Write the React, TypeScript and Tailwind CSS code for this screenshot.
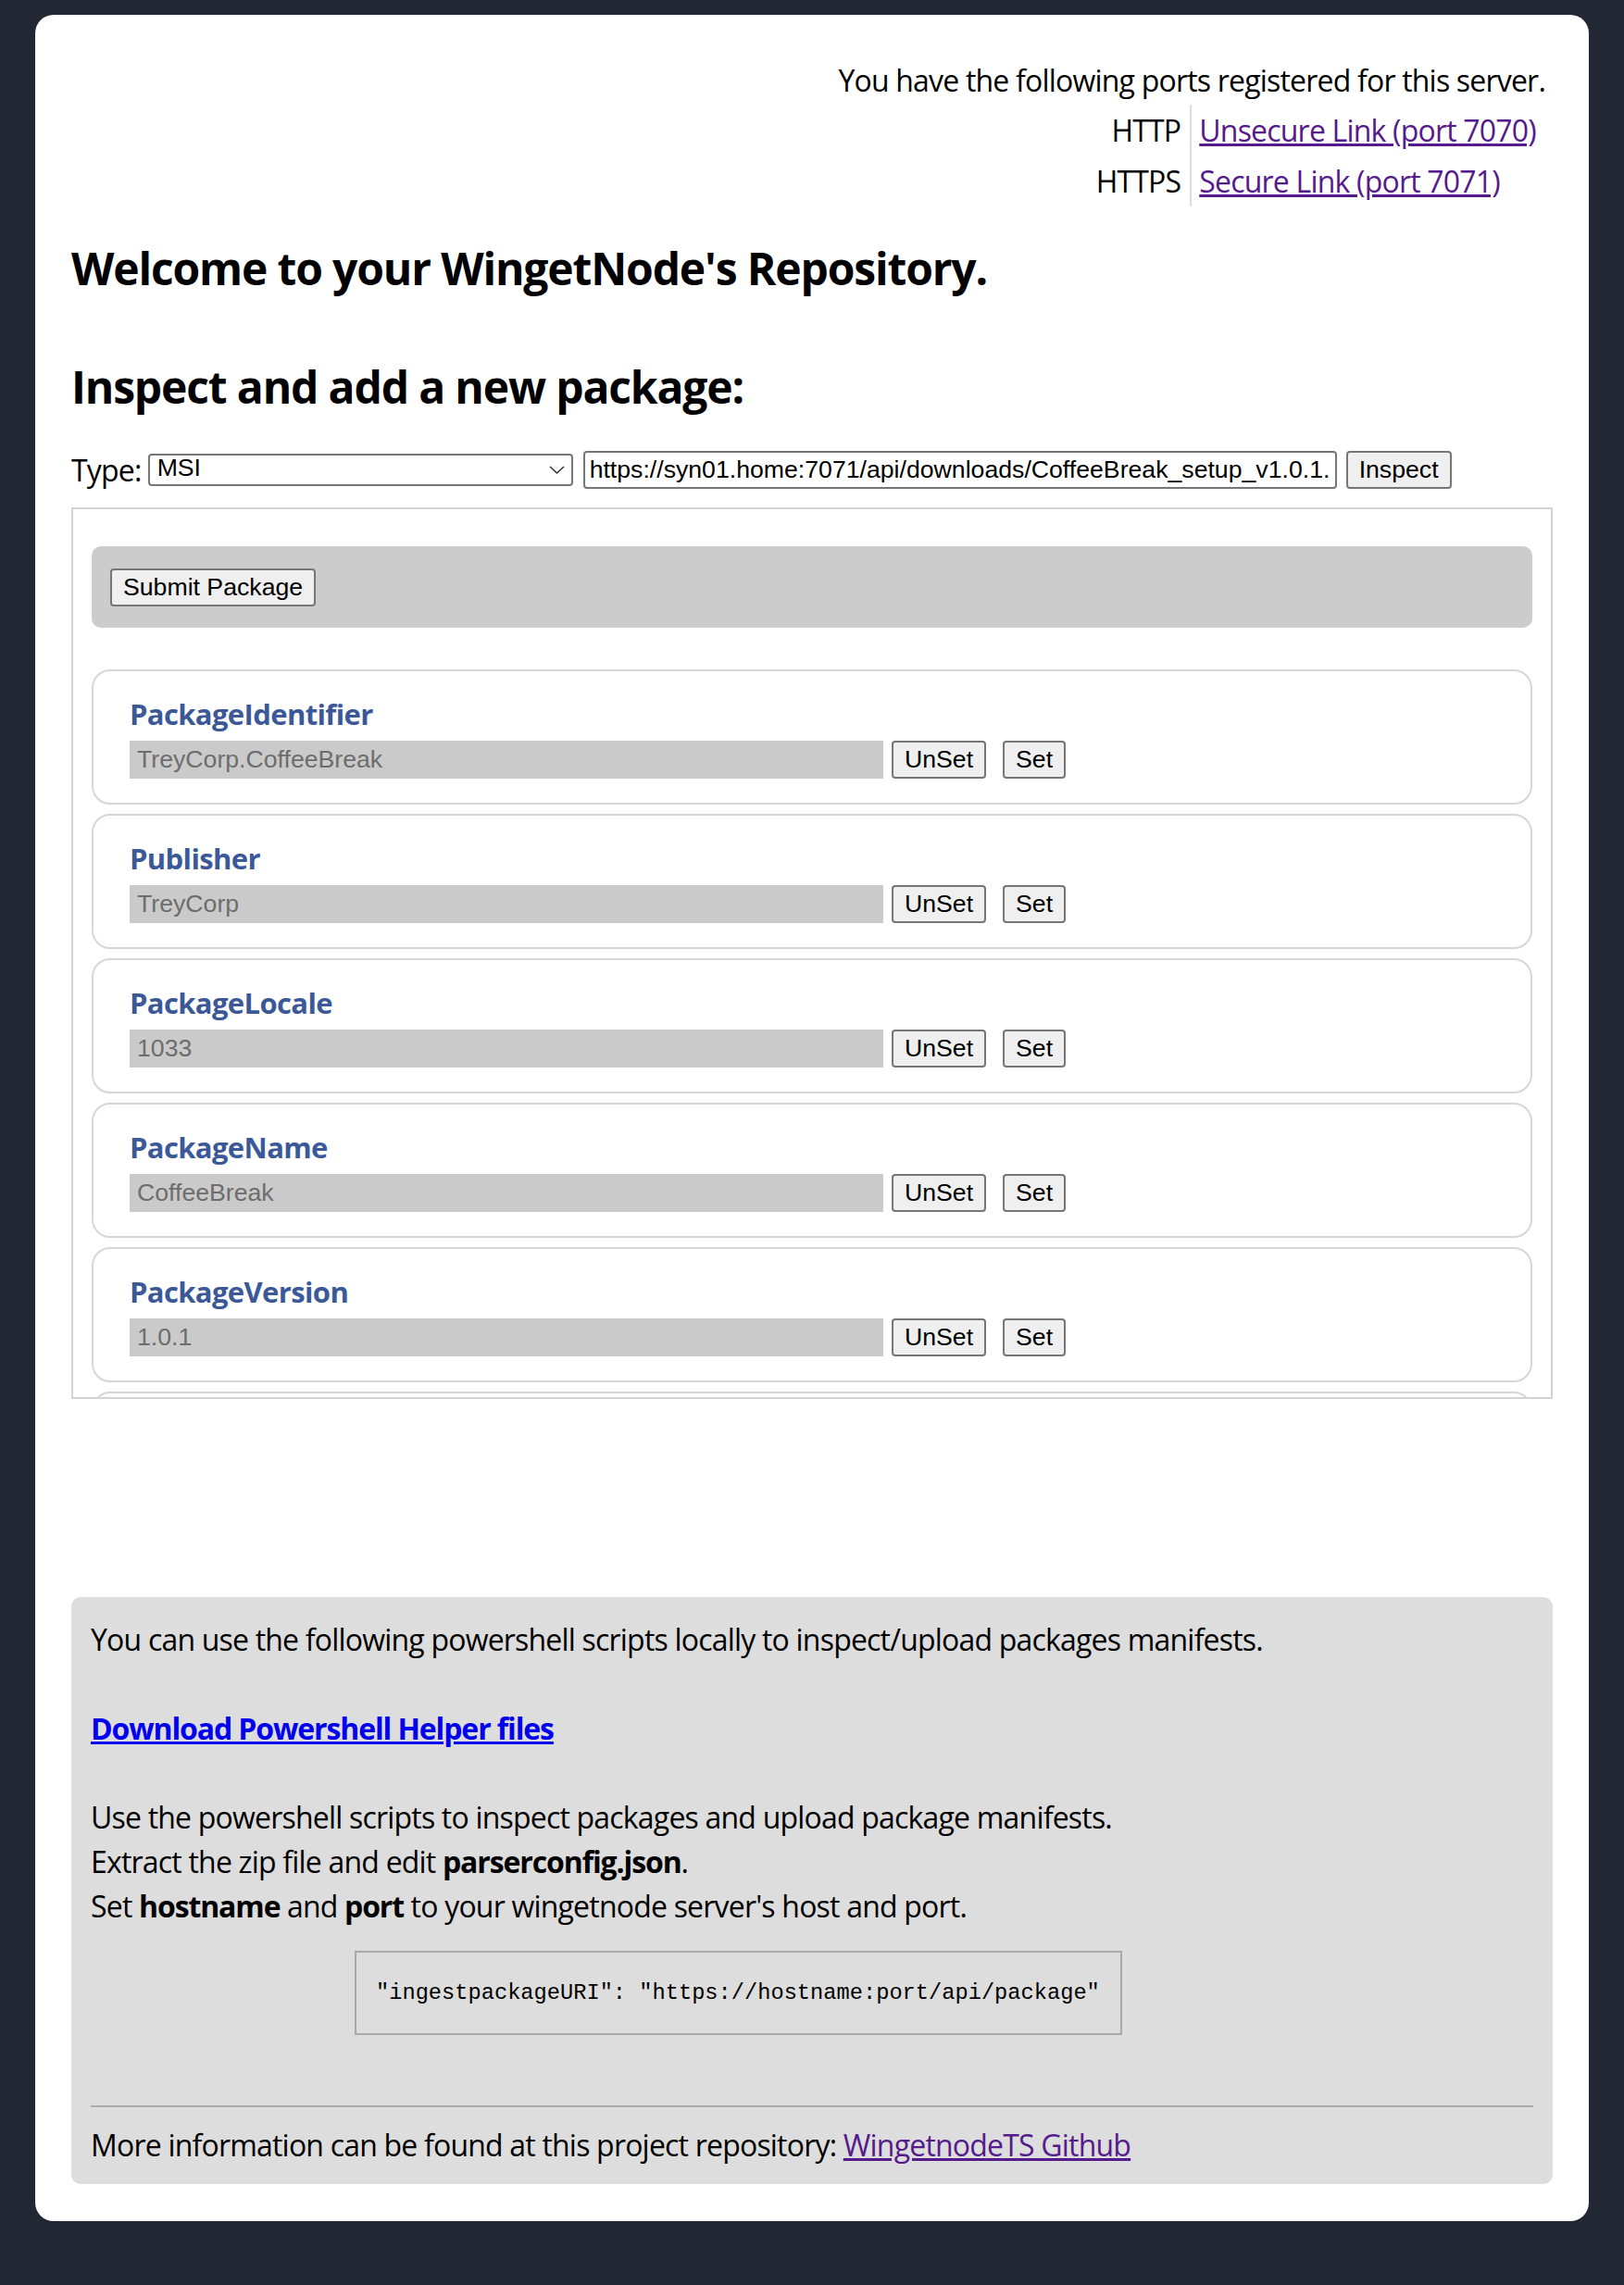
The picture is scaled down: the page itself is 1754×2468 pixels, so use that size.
import { useState } from 'react'

const fields = [
  { name: 'PackageIdentifier', value: 'TreyCorp.CoffeeBreak' },
  { name: 'Publisher', value: 'TreyCorp' },
  { name: 'PackageLocale', value: '1033' },
  { name: 'PackageName', value: 'CoffeeBreak' },
  { name: 'PackageVersion', value: '1.0.1' },
]

const ctl = "font-['Liberation_Sans',Arial,sans-serif] text-[26.67px] tracking-normal"
const btn = `${ctl} h-[41px] px-[12px] rounded-[4px] border-2 border-[#767676] bg-[#efefef] text-black leading-none`

function FieldCard({ name, value }: { name: string; value: string }) {
  return (
    <div className="mb-[10px] h-[146px] shrink-0 rounded-[20px] border-2 border-[#d6d6d6] pl-[39px] pt-[25px]">
      <div className="h-[42px] text-[31px] font-bold leading-[42px] tracking-[-0.02em] text-[#3b5998]">{name}</div>
      <div className="mt-[8px] flex items-center">
        <input
          readOnly
          value={value}
          className={`${ctl} h-[41px] w-[814px] bg-[#cacaca] px-[8px] text-[#6d6d6d] outline-none`}
        />
        <button className={`${btn} ml-[9px]`}>UnSet</button>
        <button className={`${btn} ml-[18px]`}>Set</button>
      </div>
    </div>
  )
}

export default function App() {
  const [type, setType] = useState('MSI')
  const [url, setUrl] = useState('https://syn01.home:7071/api/downloads/CoffeeBreak_setup_v1.0.1.msi')

  return (
    <div className="min-h-screen bg-[#222733] px-[38px] pt-[16px] pb-[71px] font-['Open_Sans','Noto_Sans',sans-serif] text-[32px] tracking-[-0.025em] text-black">
      <div className="rounded-[20px] bg-white px-[39px] pt-[50px] pb-[40px]">
        {/* registered ports */}
        <div className="pr-[8px] text-right">
          <p className="leading-[42px]">You have the following ports registered for this server.</p>
          <div className="mt-[5px] flex justify-end">
            <div className="grid grid-cols-[auto_auto] pr-[10px] leading-[42px]">
              <div className="flex h-[55px] items-center justify-end pr-[10px]">HTTP</div>
              <div className="flex h-[55px] items-center border-l-2 border-[#dddddd] pl-[8px]">
                <a href="#" className="text-[#551a8b] underline">Unsecure Link (port 7070)</a>
              </div>
              <div className="flex h-[55px] items-center justify-end pr-[10px]">HTTPS</div>
              <div className="flex h-[55px] items-center border-l-2 border-[#dddddd] pl-[8px]">
                <a href="#" className="text-[#551a8b] underline">Secure Link (port 7071)</a>
              </div>
            </div>
          </div>
        </div>

        <h2 className="mt-[35px] text-[48px] font-bold leading-[64px] tracking-[-0.024em]">Welcome to your WingetNode's Repository.</h2>
        <h2 className="mt-[64px] text-[48px] font-bold leading-[64px] tracking-[-0.024em]">Inspect and add a new package:</h2>

        {/* inspect row */}
        <div className="mt-[37px] flex h-[41px] items-center">
          <span className="leading-[42px]">Type:</span>
          <div className="relative ml-[7px] flex">
            <select
              value={type}
              onChange={(e) => setType(e.target.value)}
              className={`${ctl} block h-[35px] w-[459px] appearance-none rounded-[4px] border-2 border-[#767676] bg-white pt-0 pb-[4px] pl-[8px] leading-[27px] text-black outline-none`}
            >
              <option>MSI</option>
              <option>EXE</option>
              <option>MSIX</option>
            </select>
            <svg className="pointer-events-none absolute right-[9px] top-[13px]" width="17" height="9" viewBox="0 0 17 9" fill="none">
              <path d="M1 1 8.5 8 16 1" stroke="#333" strokeWidth="1.5" />
            </svg>
          </div>
          <input
            value={url}
            onChange={(e) => setUrl(e.target.value)}
            className={`${ctl} ml-[11px] h-[41px] w-[814px] rounded-[4px] border-2 border-[#767676] bg-white px-[5px] text-black outline-none`}
          />
          <button className={`${btn} ml-[10px]`}>Inspect</button>
        </div>

        {/* package manifest editor */}
        <div className="mt-[20px] flex h-[963px] flex-col overflow-hidden border-2 border-[#d3d3d3] px-[20px] pt-[40px]">
          <div className="flex h-[88px] shrink-0 items-center rounded-[10px] bg-[#cccccc] pl-[20px]">
            <button className={`${btn} h-[40px]`}>Submit Package</button>
          </div>
          <div className="mt-[45px] flex flex-col">
            {fields.map((f) => (
              <FieldCard key={f.name} name={f.name} value={f.value} />
            ))}
            {/* next card, scrolled out of view */}
            <div className="h-[146px] shrink-0 rounded-[20px] border-2 border-[#d6d6d6]" />
          </div>
        </div>

        {/* powershell helpers */}
        <div className="mt-[214px] rounded-[10px] bg-[#dddddd] px-[21px] pt-[22px] pb-[18px] leading-[48px]">
          <p>You can use the following powershell scripts locally to inspect/upload packages manifests.</p>
          <p className="mt-[48px]">
            <a href="#" className="font-bold tracking-[-0.035em] text-[#0000ee] underline">Download Powershell Helper files</a>
          </p>
          <p className="mt-[48px]">Use the powershell scripts to inspect packages and upload package manifests.</p>
          <p>
            Extract the zip file and edit <b className="font-bold tracking-[-0.035em]">parserconfig.json</b>.
          </p>
          <p>
            Set <b className="font-bold tracking-[-0.035em]">hostname</b> and <b className="font-bold tracking-[-0.035em]">port</b> to your wingetnode server's host and port.
          </p>
          <div className="ml-[285px] mt-[24px] flex h-[91px] w-[829px] items-center whitespace-nowrap border-2 border-[#a9a9a9] px-[21px] font-['Liberation_Mono',monospace] text-[23.7px] tracking-normal">
            "ingestpackageURI": "https://hostname:port/api/package"
          </div>
          <hr className="mt-[76px] border-t-2 border-[#ababab]" />
          <p className="mt-[17px]">
            More information can be found at this project repository:{' '}
            <a href="#" className="text-[#551a8b] underline">WingetnodeTS Github</a>
          </p>
        </div>
      </div>
    </div>
  )
}
